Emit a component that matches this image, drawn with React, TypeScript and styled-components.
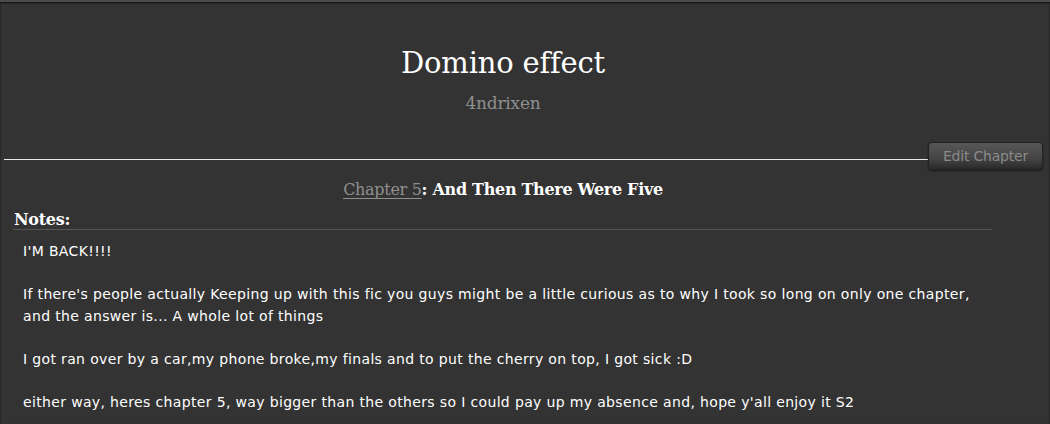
import styled, { createGlobalStyle } from 'styled-components'

const Global = createGlobalStyle`
html, body {
  margin: 0;
  padding: 0;
  background: #333333;
}
`

const Page = styled.div`
width: 1050px;
height: 424px;
overflow: hidden;
background: #333333;
border-top: 2px solid #4a4a4a;
box-shadow: inset 0 1px 2px rgba(0, 0, 0, 0.7);
box-sizing: border-box;
color: #fff;
`

const Header = styled.header`
display: flex;
flex-direction: column;
align-items: center;
padding: 41px 44px 0 0;
`

const Title = styled.h1`
margin: 0;
font-family: "DejaVu Serif", Georgia, serif;
font-weight: normal;
font-size: 29px;
line-height: 40px;
letter-spacing: -0.2px;
color: #fff;
`

const Author = styled.div`
margin-top: 8px;
font-family: "DejaVu Serif", Georgia, serif;
font-size: 17px;
line-height: 24px;
color: #8f8f8f;
letter-spacing: -0.2px;
`

const Toolbar = styled.div`
display: flex;
align-items: center;
margin-top: 27px;
padding: 0 7px 0 4px;
`

const Rule = styled.div`
flex: 1;
height: 1px;
margin-top: 6px;
background: #e8e8e8;
`

const Button = styled.button`
height: 28px;
width: 115px;
padding: 0;
border: 1px solid #222;
border-radius: 4px;
background: linear-gradient(#575757, #444 60%, #2a2a2a);
color: #8a8a8a;
font-family: "DejaVu Sans", Verdana, sans-serif;
font-size: 14px;
letter-spacing: -0.2px;
box-shadow: 0 1px 2px rgba(0, 0, 0, 0.5);
`

const ChapterTitle = styled.h2`
margin: 8px 44px 0 0;
text-align: center;
font-family: "DejaVu Serif", Georgia, serif;
font-size: 16px;
line-height: 24px;
font-weight: bold;
letter-spacing: -0.3px;
color: #fff;
`

const ChapterLink = styled.a`
color: #8f8f8f;
font-weight: normal;
text-decoration: underline;
text-underline-offset: 3px;
`

const Notes = styled.section`
margin: 9px 58px 0 13px;
`

const NotesHeading = styled.h3`
margin: 0;
padding-left: 1px;
font-family: "DejaVu Serif", Georgia, serif;
font-size: 16px;
line-height: 18px;
font-weight: bold;
letter-spacing: -0.3px;
color: #fff;
border-bottom: 1px solid #555;
`

const NotesBody = styled.div`
padding: 10px 20px 0 10px;
font-family: "DejaVu Sans", Verdana, sans-serif;
font-size: 14px;
line-height: 22px;
letter-spacing: 0.35px;
color: #fff;
`

const Para = styled.p`
margin: 0 0 21px;
`

export default function App() {
  return (
    <Page>
      <Global />
      <Header>
        <Title>Domino effect</Title>
        <Author>4ndrixen</Author>
      </Header>
      <Toolbar>
        <Rule />
        <Button>Edit Chapter</Button>
      </Toolbar>
      <ChapterTitle>
        <ChapterLink>Chapter 5</ChapterLink>: And Then There Were Five
      </ChapterTitle>
      <Notes>
        <NotesHeading>Notes:</NotesHeading>
        <NotesBody>
          <Para>I'M BACK!!!!</Para>
          <Para>
            If there's people actually Keeping up with this fic you guys might be a little curious as to why I took so long on only one chapter, and the answer is... A whole lot of things
          </Para>
          <Para>I got ran over by a car,my phone broke,my finals and to put the cherry on top, I got sick :D</Para>
          <Para>either way, heres chapter 5, way bigger than the others so I could pay up my absence and, hope y'all enjoy it S2</Para>
        </NotesBody>
      </Notes>
    </Page>
  )
}
